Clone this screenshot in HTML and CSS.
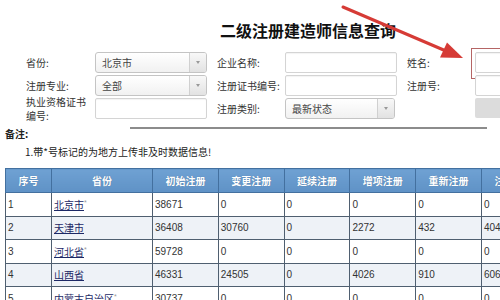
FILE: index.html
```html
<!DOCTYPE html>
<html lang="zh-CN">
<head>
<meta charset="utf-8">
<title>二级注册建造师信息查询</title>
<link rel="stylesheet" href="styles.css">
</head>
<body>
<div class="page">
  <h1 class="title">二级注册建造师信息查询</h1>

  <div class="form">
    <div class="lbl">省份:</div>
    <div class="field"><div class="select"><span class="sel-text">北京市</span><span class="sel-btn"><span class="caret"></span></span></div></div>
    <div class="lbl gap">企业名称:</div>
    <div class="field"><div class="input"></div></div>
    <div class="lbl gap">姓名:</div>
    <div class="field highlight"><div class="input"></div></div>

    <div class="lbl">注册专业:</div>
    <div class="field"><div class="select"><span class="sel-text">全部</span><span class="sel-btn"><span class="caret"></span></span></div></div>
    <div class="lbl gap">注册证书编号:</div>
    <div class="field"><div class="input"></div></div>
    <div class="lbl gap">注册号:</div>
    <div class="field"><div class="input"></div></div>

    <div class="lbl two">执业资格证书<br>编号:</div>
    <div class="field"><div class="input"></div></div>
    <div class="lbl gap">注册类别:</div>
    <div class="field"><div class="select narrow"><span class="sel-text">最新状态</span><span class="sel-btn"><span class="caret"></span></span></div></div>
    <div class="lbl gap"></div>
    <div class="field"><div class="button"></div></div>
  </div>

  <div class="note-row">
    <span class="note-title">备注:</span>
    <span class="rule"></span>
  </div>
  <p class="note">1.带*号标记的为地方上传非及时数据信息!</p>

  <table class="grid">
    <colgroup>
      <col class="c-no"><col class="c-prov"><col class="c-n"><col class="c-n"><col class="c-n"><col class="c-n"><col class="c-n"><col class="c-n">
    </colgroup>
    <thead>
      <tr><th>序号</th><th>省份</th><th>初始注册</th><th>变更注册</th><th>延续注册</th><th>增项注册</th><th>重新注册</th><th>注销注册</th></tr>
    </thead>
    <tbody>
      <tr><td>1</td><td><a href="#">北京市</a><sup>*</sup></td><td>38671</td><td>0</td><td>0</td><td>0</td><td>0</td><td>0</td></tr>
      <tr class="alt"><td>2</td><td><a href="#">天津市</a></td><td>36408</td><td>30760</td><td>0</td><td>2272</td><td>432</td><td>4045</td></tr>
      <tr><td>3</td><td><a href="#">河北省</a><sup>*</sup></td><td>59728</td><td>0</td><td>0</td><td>0</td><td>0</td><td>0</td></tr>
      <tr class="alt"><td>4</td><td><a href="#">山西省</a></td><td>46331</td><td>24505</td><td>0</td><td>4026</td><td>910</td><td>6063</td></tr>
      <tr><td>5</td><td><a href="#">内蒙古自治区</a><sup>*</sup></td><td>30737</td><td>0</td><td>0</td><td>0</td><td>0</td><td>0</td></tr>
    </tbody>
  </table>

  <svg class="arrow" width="500" height="100" viewBox="0 0 500 100" aria-hidden="true">
    <line x1="343" y1="7" x2="446" y2="51" stroke="#d63b36" stroke-width="3" stroke-linecap="round"/>
    <polygon points="463,58 440,57.5 447,42.5" fill="#d63b36"/>
  </svg>
</div>
</body>
</html>
```

FILE: styles.css
```css
html, body {
  margin: 0;
  padding: 0;
  overflow: hidden;
  background: #fff;
}

.page {
  position: relative;
  width: 500px;
  height: 300px;
  overflow: hidden;
  font-family: "Noto Sans CJK SC", "Liberation Sans", sans-serif;
  font-size: 10px;
  color: #333;
}

.title {
  margin: 0;
  padding: 20px 0 0 220px;
  height: 32px;
  box-sizing: border-box;
  font-size: 16px;
  line-height: 20px;
  font-weight: 700;
  color: #111;
  white-space: nowrap;
}

.form {
  display: grid;
  grid-template-columns: 69px 112px 78px 112px 78px 112px;
  grid-auto-rows: 21px;
  row-gap: 2px;
  padding: 20px 0 0 26px;
  width: 700px;
}

.lbl {
  align-self: center;
  line-height: 13px;
  white-space: nowrap;
  color: #333;
}

.lbl.gap {
  padding-left: 10px;
}

.lbl.two {
  line-height: 14px;
}

.field {
  position: relative;
  display: flex;
}

.input {
  flex: 1;
  box-sizing: border-box;
  height: 21px;
  border: 1px solid #d4d4d4;
  border-radius: 2px;
  background: #fff;
  box-shadow: inset 0 1px 1px rgba(0, 0, 0, 0.05);
}

.highlight::before {
  content: "";
  position: absolute;
  left: -4px;
  top: -4px;
  right: -4px;
  bottom: -6px;
  border: 1px solid #b56565;
}

.select {
  flex: 1;
  display: flex;
  box-sizing: border-box;
  height: 21px;
  border: 1px solid #c4c4c4;
  border-radius: 3px;
  background: linear-gradient(#ffffff, #f1f1f1);
  overflow: hidden;
}

.select.narrow {
  flex: 0 0 110px;
}

.sel-text {
  flex: 1;
  padding-left: 6px;
  line-height: 19px;
  color: #444;
}

.sel-btn {
  width: 16px;
  border-left: 1px solid #d0d0d0;
  background: linear-gradient(#f8f8f8, #e2e2e2);
  display: flex;
  align-items: center;
  justify-content: center;
}

.caret {
  width: 0;
  height: 0;
  border-left: 2px solid transparent;
  border-right: 2px solid transparent;
  border-top: 3px solid #999;
}

.button {
  flex: 1;
  height: 20px;
  border-radius: 2px;
  background: #dcdcdc;
}

.note-row {
  display: flex;
  align-items: flex-start;
  padding: 8px 0 0 5px;
  height: 18px;
  box-sizing: border-box;
}

.note-title {
  font-weight: 700;
  line-height: 14px;
  margin-top: 0;
  color: #222;
}

.rule {
  width: 357px;
  height: 2px;
  margin-left: auto;
  margin-right: 13px;
  background: #8c8c8c;
}

.note {
  margin: 8px 0 0 25px;
  line-height: 14px;
  color: #222;
}

.grid {
  margin: 9px 0 0 5px;
  border-collapse: collapse;
  table-layout: fixed;
  width: 542px;
  font-family: "Liberation Sans", "Noto Sans CJK SC", sans-serif;
  font-size: 10px;
}

.c-no { width: 46px; }
.c-prov { width: 101px; }
.c-n { width: 65.8px; }

.grid th {
  height: 23px;
  padding: 0;
  background: linear-gradient(#6fa1d3, #5f92c6);
  color: #fff;
  font-family: "Noto Sans CJK SC", sans-serif;
  font-weight: 700;
  font-size: 10px;
  text-align: center;
  border: 1px solid #43709f;
  text-shadow: 0 0 1px rgba(0, 0, 0, 0.25);
  white-space: nowrap;
}

.grid td {
  height: 22.5px;
  padding: 0 0 0 2px;
  border: 1px solid #4f5f70;
  color: #333;
  white-space: nowrap;
  overflow: hidden;
}

.grid tr.alt td {
  background: #eef2f7;
}

.grid a {
  font-family: "Noto Sans CJK SC", sans-serif;
  color: #1d2966;
  text-decoration: underline;
}

.grid sup {
  font-size: 7px;
  color: #999;
  vertical-align: 4px;
  line-height: 0;
}

.arrow {
  position: absolute;
  left: 0;
  top: 0;
  pointer-events: none;
}
```
